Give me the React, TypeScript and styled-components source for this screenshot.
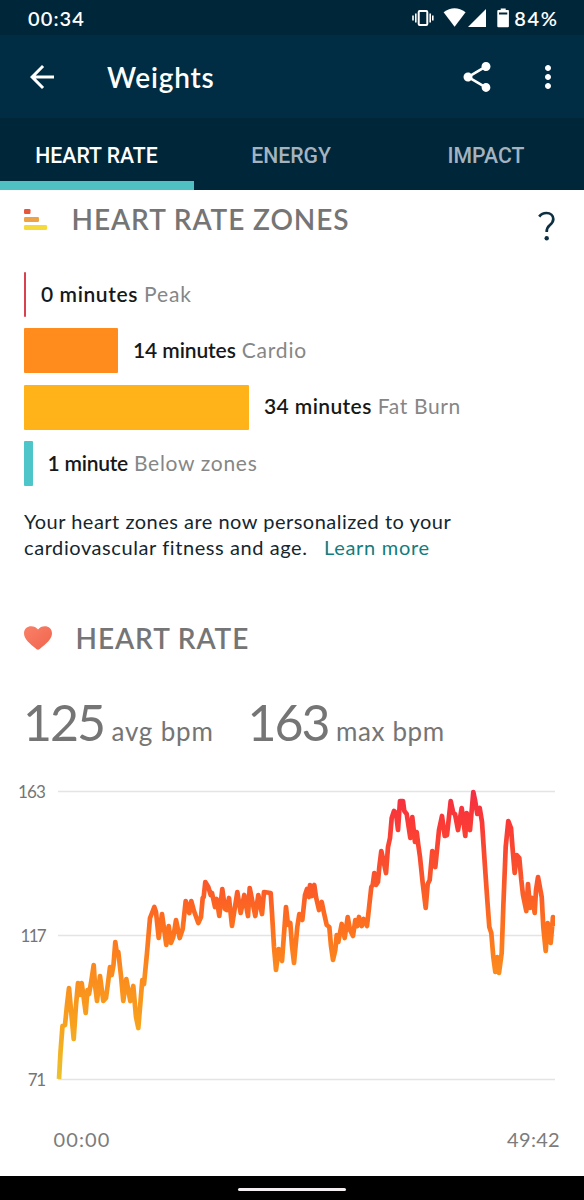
import React from "react";
import styled, { createGlobalStyle } from "styled-components";
import { MdArrowBack, MdMoreVert, MdShare } from "react-icons/md";

const GlobalStyle = createGlobalStyle`
  * { box-sizing: border-box; }
  body { margin: 0; background: #fff; font-family: Lato, "Open Sans", sans-serif; }
  h1, h2, p { margin: 0; }
`;

const Screen = styled.div`
  width: 584px;
  height: 1200px;
  display: flex;
  flex-direction: column;
  background: #fff;
  overflow: hidden;
`;

const Text = styled.span<{ $space?: number }>`
  letter-spacing: ${(p) => p.$space ?? 0}px;
  white-space: pre;
`;

const StatusBar = styled.header`
  height: 35px;
  flex: none;
  display: flex;
  align-items: center;
  justify-content: space-between;
  padding: 1px 25.5px 0 28px;
  background: #002639;
  color: #fff;
  font-size: 20px;
  font-weight: 600;
  line-height: 24px;
`;

const StatusIcons = styled.div`
  display: flex;
  align-items: center;
`;

const StatusSvg = styled.svg`
  display: block;
  width: 98px;
  height: 24px;
  margin-right: 4px;
`;

const AppBar = styled.div`
  height: 83px;
  flex: none;
  display: flex;
  align-items: center;
  padding: 0 18px 0 24px;
  background: #002d43;
  color: #fff;
`;

const Title = styled.h1`
  flex: 1;
  margin-left: 47px;
  font-size: 28px;
  line-height: 32px;
  font-weight: 600;
`;

const IconButton = styled.button<{ $gap?: number }>`
  display: flex;
  padding: 0;
  border: 0;
  background: none;
  color: #fff;
  margin-left: ${(p) => p.$gap ?? 0}px;
`;

const Tabs = styled.nav`
  height: 72px;
  flex: none;
  display: grid;
  grid-template-columns: 194px 195px 195px;
  background: #002639;
`;

const Tab = styled.div<{ $active?: boolean }>`
  display: flex;
  align-items: center;
  justify-content: center;
  padding: 12px 1px 0 0;
  font-family: Roboto, sans-serif;
  font-size: 21.2px;
  font-weight: 500;
  color: ${(p) => (p.$active ? "#fff" : "#a4b3bf")};
  border-bottom: 9px solid ${(p) => (p.$active ? "#4fc1c2" : "transparent")};
`;

const Section = styled.section`
  padding: 0 24px;
`;

const SectionHeader = styled.div<{ $top: number }>`
  display: flex;
  align-items: center;
  height: 34px;
  margin-top: ${(p) => p.$top}px;
`;

const SectionTitle = styled.h2<{ $indent: number }>`
  flex: 1;
  margin-left: ${(p) => p.$indent}px;
  font-size: 28px;
  line-height: 34px;
  font-weight: 600;
  color: #757575;
`;

const HelpIcon = styled.svg`
  width: 18px;
  height: 30px;
  overflow: visible;
`;

const ZoneList = styled.div`
  display: flex;
  flex-direction: column;
  gap: 11.3px;
  margin-top: 36px;
`;

const ZoneRow = styled.div`
  display: flex;
  align-items: center;
  height: 45px;
  font-size: 21px;
  line-height: 26px;
`;

const ZoneBar = styled.div<{ $color: string }>`
  height: 45px;
  border-radius: 1px;
  background: ${(p) => p.$color};
  margin-right: 15px;
`;

const Minutes = styled(Text)`
  font-weight: 600;
  color: #16191b;
  padding-bottom: 1.5px;
`;

const ZoneName = styled(Text)`
  color: #868686;
  margin-left: 6px;
  padding-bottom: 1.5px;
`;

const Note = styled.p`
  margin-top: 22px;
  display: flex;
  flex-direction: column;
  font-size: 20px;
  line-height: 26px;
  color: #14262f;
`;

const Link = styled(Text)`
  color: #127c7e;
  margin-left: 16.5px;
`;

const Stats = styled.div`
  display: flex;
  align-items: baseline;
  height: 64px;
  margin-top: 35px;
  color: #757575;
`;

const Big = styled(Text)`
  font-size: 50px;
  line-height: 64px;
  margin-left: -1px;
`;

const Unit = styled(Text)`
  font-size: 26px;
  margin: 0 35px 0 7.5px;
`;

const ChartArea = styled.div`
  display: grid;
  grid-template-columns: 45px 1fr;
  column-gap: 10px;
  height: 312px;
  margin-top: 26px;
`;

const AxisLabels = styled.div`
  display: flex;
  flex-direction: column;
  gap: 122px;
  text-align: right;
  font-size: 17px;
  line-height: 22px;
  color: #757575;
  padding-top: 1px;
`;

const Plot = styled.svg`
  display: block;
  width: 500px;
  height: 312px;
`;

const TimeAxis = styled.div`
  display: flex;
  justify-content: space-between;
  margin-top: 34px;
  padding: 0 24px 0 53.5px;
  font-size: 20px;
  line-height: 26px;
  color: #7c7c7c;
`;

const NavBar = styled.footer`
  height: 24px;
  flex: none;
  margin-top: auto;
  display: flex;
  align-items: center;
  justify-content: center;
  background: #000;
`;

const Pill = styled.div`
  width: 108px;
  height: 3px;
  border-radius: 2px;
  background: #f4eef2;
  margin-top: 2px;
`;

const zones = [
  { minutes: "0 minutes", name: "Peak", width: 2, color: "#d8414f", m: 0.6, n: 0.9 },
  { minutes: "14 minutes", name: "Cardio", width: 94, color: "#ff8c1c", m: -0.1, n: 0.8 },
  { minutes: "34 minutes", name: "Fat Burn", width: 225, color: "#ffb319", m: 0.4, n: 0.65 },
  { minutes: "1 minute", name: "Below zones", width: 8.6, color: "#4dc5c9", m: -0.25, n: 0.7 },
];

const trace =
  "59,1079 60.5,1052 62.5,1026 65,1025 67,1005 69,988 71,1010 73.7,1039 76,1005 78,983 80,995 81.7,983 85.7,1013 87.5,990 89,994 91,983 93.7,965 95,985 97,1001 100,976 103.3,1001 106,998 108,983 110,967 111.7,975 113.5,965 115.3,942 117,954 118.3,952 121,976 123.3,1001 126.3,979 130.3,1001 133.3,986 136,1017 138.3,1028 142.3,980 144,984 147,953 150,918 152,913 154.3,907 156,912 158.7,938 162,914 166.3,945 168.7,926 171,943 173.3,937 176,920 179.7,938 182.7,929 185.7,901 189.3,913 191.3,901 194,911 198.3,923 201,917 202.7,898 203.7,897 205.3,882 208.3,887 210.7,895 212,893 215,907 216.7,899 219.3,916 222.3,889 225,909 226.7,910 229,898 232,926 237.3,892 240.7,913 244.3,895 248,916 249.7,888 252.3,901 255.3,916 258.3,895 262,914 264,892 270.7,893 272,913 274,947 276,970 278.7,949 282,961 286,907 288,925 290.3,923 292,946 294,963 297.3,927 299.3,914 302.3,920 305,895 307,889 309,897 310,885 312,896 314.3,885 316,897 319,910 321.7,902 324,913 326.7,925 329.3,927 331,946 333,960 335.3,950 336.7,935 338.3,942 341.7,924 344.7,938 347.7,917 350,930 353,936 355.3,920 357.3,926 359,917 361.7,926 363.7,919 367,926 369,908 371.3,887 372.7,885 374.3,873 376,885 378,882 379.3,867 381.3,851 383.3,860 386,873 388,847 390,838 391.7,818 394,811 396,813 398,830 400,801 403,801 404.3,811 406.7,814 410.3,838 412.3,817 415,842 416.7,832 418.3,845 420,857 422.7,883 425.7,908 427.7,884 429.7,880 432.3,851 435.3,867 439,830 442,816 444.7,836 447,835 450.7,801 453.3,813 455,814 458,830 461.7,808 465.3,836 466.7,813 470,830 473.3,792 475,800 477.3,814 479.7,808 482,822 485,867 487.3,900 489.3,927 491.3,933 493.3,957 495.3,972 497.3,957 499,973 501.7,953 503.3,907 505.7,847 508.3,821 511,828 512.7,850 514.7,873 516.7,855 519.3,858 521.3,880 523,895 526.3,911 528,884 530,908 532.3,898 534.7,913 536,890 538,877 541.7,897 543.3,927 545.7,951 547.7,923 550.7,943 553,917 554,926";

const App: React.FC = () => (
  <Screen>
    <GlobalStyle />
    <StatusBar>
      <Text $space={1.1}>00:34</Text>
      <StatusIcons>
        <StatusSvg viewBox="412 6 98 24" fill="#fff">
          <rect x="418.7" y="11" width="8.6" height="14" rx="1" fill="none" stroke="#fff" strokeWidth="2" />
          <path d="M413 15.5v5M415.8 13.5v9M430.2 13.5v9M432.8 15.5v5" stroke="#fff" strokeWidth="1.6" />
          <path d="M443.6 12.2Q454.5 4.5 465.6 12.2L454.6 26.8Z" />
          <path d="M486 9v18H468Z" />
          <path fillRule="evenodd" d="M498.3 10h2.4V8.4h5V10h2.4q.8 0 .8.8v15.4q0 1-1 1h-9.6q-1 0-1-1V11q0-1 1-1ZM499 12.4v2h8.3v-2Z" />
        </StatusSvg>
        <Text $space={1.6}>84%</Text>
      </StatusIcons>
    </StatusBar>
    <AppBar>
      <IconButton aria-label="Back"><MdArrowBack size={36} /></IconButton>
      <Title><Text $space={0.8}>Weights</Text></Title>
      <IconButton aria-label="Share"><MdShare size={36} /></IconButton>
      <IconButton aria-label="More" $gap={35}><MdMoreVert size={36} /></IconButton>
    </AppBar>
    <Tabs>
      <Tab $active><Text>HEART RATE</Text></Tab>
      <Tab><Text>ENERGY</Text></Tab>
      <Tab><Text>IMPACT</Text></Tab>
    </Tabs>

    <Section>
      <SectionHeader $top={12}>
        <svg width="23" height="21" viewBox="0 0 23 21">
          <rect y="0" width="6.5" height="5" rx="1.2" fill="#e4573d" />
          <rect y="8" width="15" height="5" rx="1.2" fill="#eda345" />
          <rect y="16" width="23" height="5" rx="1.2" fill="#f6da3c" />
        </svg>
        <SectionTitle $indent={24.5}><Text $space={0.9}>HEART RATE ZONES</Text></SectionTitle>
        <HelpIcon viewBox="0 0 18 30" fill="none">
          <path d="M-2.8 12.6C-1 10.2 1.5 9 4.4 9c4.1 0 6.9 2.4 6.9 6.1 0 3.1-1.8 4.7-3.6 6.2-2.1 1.7-3.1 3-3 6.7" stroke="#0d2f42" strokeWidth="2.7" />
          <circle cx="4.7" cy="34.3" r="2.2" fill="#0d2f42" />
        </HelpIcon>
      </SectionHeader>
      <ZoneList>
        {zones.map((z) => (
          <ZoneRow key={z.name}>
            <ZoneBar $color={z.color} style={{ width: z.width }} />
            <Minutes $space={z.m}>{z.minutes}</Minutes>
            <ZoneName $space={z.n}>{z.name}</ZoneName>
          </ZoneRow>
        ))}
      </ZoneList>
      <Note>
        <Text $space={0.49}>Your heart zones are now personalized to your</Text>
        <span><Text $space={0.58}>cardiovascular fitness and age.</Text><Link $space={0.7}>Learn more</Link></span>
      </Note>
    </Section>

    <Section>
      <SectionHeader $top={61.1}>
        <svg width="28" height="24" viewBox="0 0 28 24">
          <defs>
            <linearGradient id="heart" x1="0" y1="0" x2="1" y2="1">
              <stop offset="0" stopColor="#fa8068" />
              <stop offset="1" stopColor="#f0654c" />
            </linearGradient>
          </defs>
          <path d="M14 3.6C10.5-1.5 0-1.2 0 7.5c0 5.5 6 10.5 12.3 15.500q1.700 1.400 3.400 0C22 18 28 13 28 7.500c0-8.700-10.500-9-14-3.900Z" fill="url(#heart)" />
        </svg>
        <SectionTitle $indent={23.5}><Text $space={0.9}>HEART RATE</Text></SectionTitle>
      </SectionHeader>
      <Stats>
        <Big $space={-2}>125</Big><Unit $space={0.8}>avg bpm</Unit>
        <Big $space={-2}>163</Big><Unit $space={0.6}>max bpm</Unit>
      </Stats>
    </Section>

    <ChartArea>
      <AxisLabels>
        <Text $space={-0.9}>163</Text>
        <Text $space={-1.7}>117</Text>
        <Text $space={-1.2}>71</Text>
      </AxisLabels>
      <Plot viewBox="55 780 500 312">
        <defs>
          <linearGradient id="rate" gradientUnits="userSpaceOnUse" x1="0" y1="791" x2="0" y2="1079">
            <stop offset="0" stopColor="#f32f43" />
            <stop offset="0.12" stopColor="#fb3b35" />
            <stop offset="0.3" stopColor="#f9552b" />
            <stop offset="0.45" stopColor="#fd6d1f" />
            <stop offset="0.62" stopColor="#fb891d" />
            <stop offset="0.8" stopColor="#f8a01d" />
            <stop offset="1" stopColor="#ecc22b" />
          </linearGradient>
        </defs>
        <path d="M58 791.5H555M58 935.5H555M58 1079.5H555" stroke="#e4e4e4" strokeWidth="1.4" />
        <polyline points={trace} fill="none" stroke="url(#rate)" strokeWidth="4.7" strokeLinejoin="round" />
      </Plot>
    </ChartArea>
    <TimeAxis>
      <Text $space={1.1}>00:00</Text>
      <Text $space={0.3}>49:42</Text>
    </TimeAxis>
    <NavBar><Pill /></NavBar>
  </Screen>
);

export default App;
